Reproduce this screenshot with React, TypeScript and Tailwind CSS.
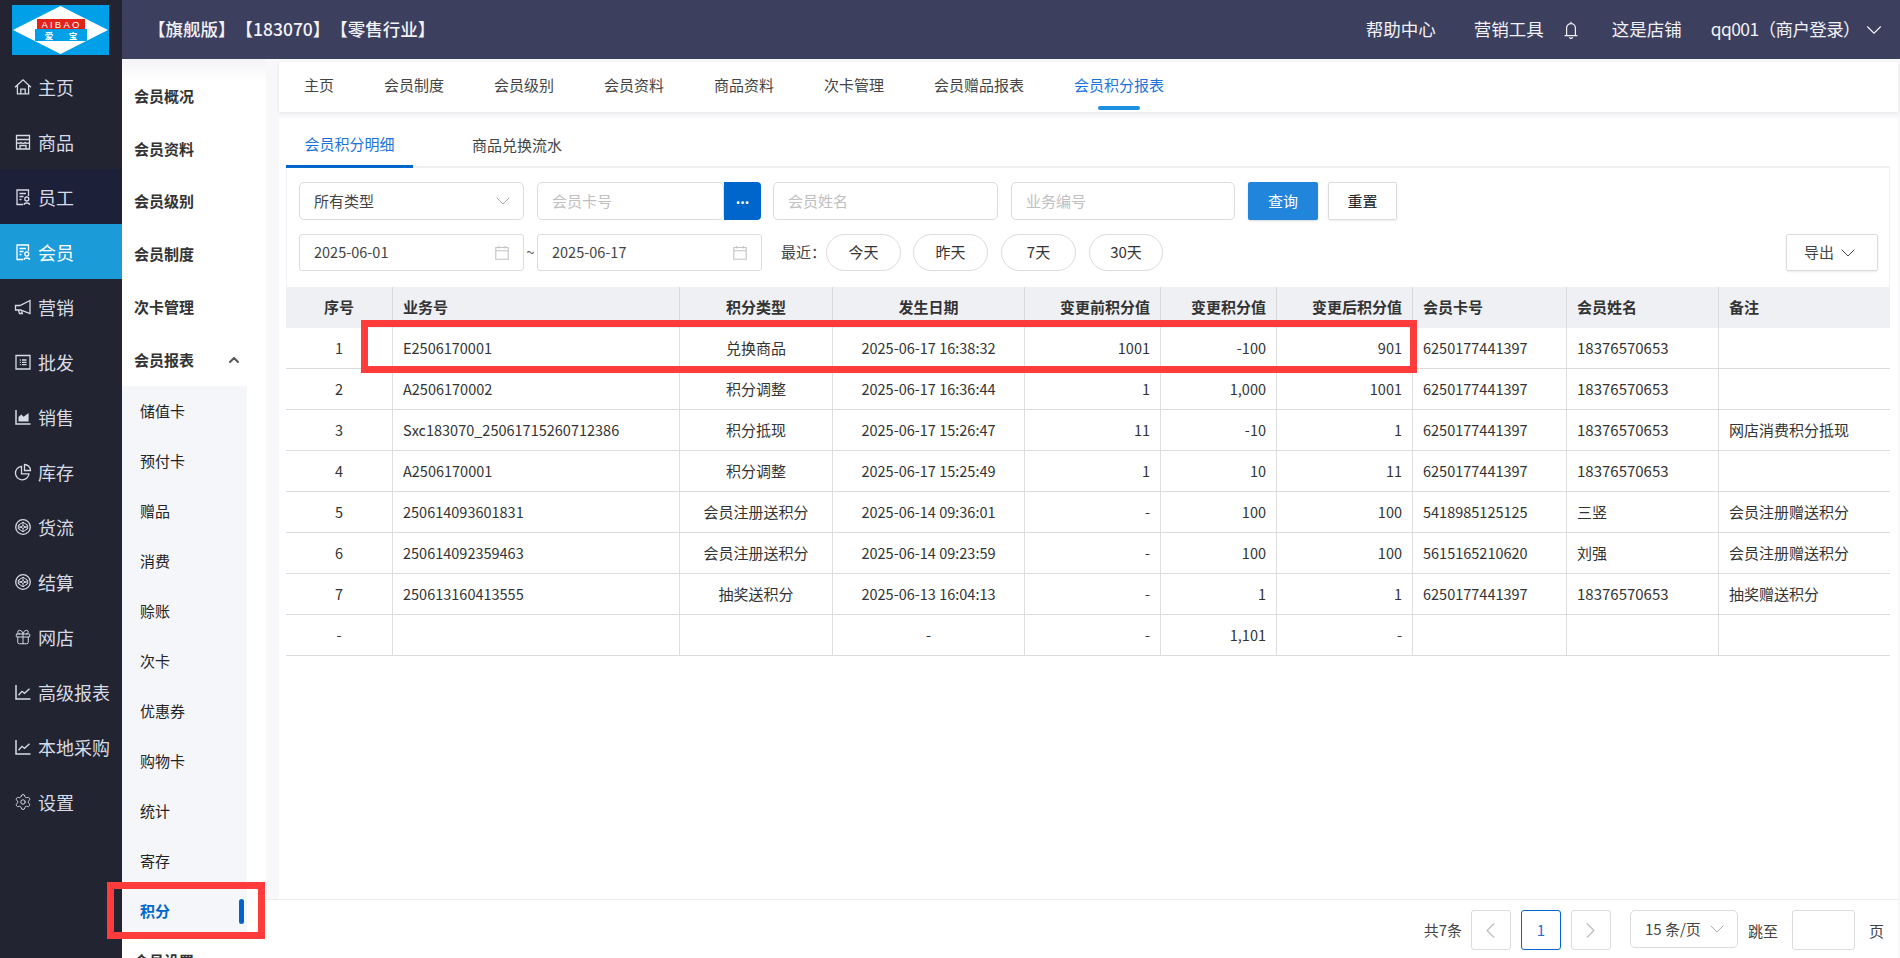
import { ChevronDown, ChevronLeft, ChevronRight, ChevronUp, Gift, Settings } from "lucide-react";
import type { ReactNode } from "react";

const iconProps = { width: 18, height: 18, viewBox: "0 0 18 18", fill: "none", stroke: "currentColor", strokeWidth: 1.3 };

const IconHome = () => (
  <svg {...iconProps}>
    <path d="M1 9.2 9 1.8l8 7.4M3.4 7.6v8.2h11.2V7.6M6.800 15.8v-4.600h4.400v4.600" />
  </svg>
);
const IconStore = () => (
  <svg {...iconProps}>
    <path d="M2.500 2.500h13v13.500h-13zM2.500 6.500h13M2.500 9.500c2 1.200 3 1.200 4.300 0 1.400 1.200 3 1.200 4.400 0 1.300 1.200 2.500 1.200 4.300 0M6 16v-3.500h6V16" />
  </svg>
);
const IconDoc = () => (
  <svg {...iconProps}>
    <path d="M14.500 8V2H3v14.500h6M5.500 5.500h6.500M5.500 8.500h4M5.500 11.500h2" />
    <circle cx="12.800" cy="11" r="2" />
    <path d="M10 16.800c.3-2.400 5.300-2.400 5.600 0" />
  </svg>
);
const IconMegaphone = () => (
  <svg {...iconProps}>
    <path d="M16 2.500v13L6.500 12H1.500V7.500H6zM4.500 12.300l1 3.200h2.800l-.7-2.200" />
  </svg>
);
const IconList = () => (
  <svg {...iconProps}>
    <path d="M2 2.500h14v13.500H2zM8 7h4.500M8 9.300h4.500M8 11.600h4.500M5.800 7h1M5.800 9.300h1M5.800 11.600h1" />
  </svg>
);
const IconArea = () => (
  <svg {...iconProps}>
    <path d="M2 2v14h14.500" strokeWidth="1.500" />
    <path d="M4.500 13.500V9l2.800-2.500 2.300 2.300 2-1.500 3-2.300v8.500z" fill="currentColor" stroke="none" />
  </svg>
);
const IconPie = () => (
  <svg {...iconProps}>
    <path d="M7.500 3.300a6.800 6.800 0 1 0 7.500 7.500H7.500zM10.500 1.500v6h6a6 6 0 0 0-6-6z" />
  </svg>
);
const IconCube = () => (
  <svg {...iconProps}>
    <circle cx="9" cy="9" r="7.300" />
    <path d="M9 4.200l4.700 3.100v3.400L9 13.800l-4.700-3.100V7.300zM4.300 7.300 9 10.500l4.700-3.200M4.300 10.700 9 7.500l4.700 3.200M9 4.200v3.300M9 10.500v3.300" strokeWidth="1" />
  </svg>
);
const IconLine = () => (
  <svg {...iconProps}>
    <path d="M2 2v14h14.500" strokeWidth="1.500" />
    <path d="M4.500 12.300 8 8.300l2.500 2 5-4.500" />
  </svg>
);
const IconCalendar = () => (
  <svg width="14" height="15" viewBox="0 0 14 15" fill="none" stroke="#c4c4c4" strokeWidth="1.100">
    <path d="M.8 2.500h12.400v11.700H.8zM.8 5.800h12.400M3.800.8v2.800M10.200.8v2.800" />
  </svg>
);
const IconBell = () => (
  <svg width="14" height="18" viewBox="0 0 14 18" fill="none" stroke="currentColor" strokeWidth="1.200">
    <path d="M7 .8v1.600M2.600 14.500V7a4.400 4.400 0 0 1 8.800 0v7.500M.6 14.600h12.800M5.400 16.300a1.700 1.700 0 0 0 3.200 0" />
  </svg>
);

const railItems: { label: string; icon: ReactNode; cls?: string }[] = [
  { label: "主页", icon: <IconHome /> },
  { label: "商品", icon: <IconStore /> },
  { label: "员工", icon: <IconDoc />, cls: "bg-[#1c2039]" },
  { label: "会员", icon: <IconDoc />, cls: "bg-[#1b9cd9] text-white" },
  { label: "营销", icon: <IconMegaphone /> },
  { label: "批发", icon: <IconList /> },
  { label: "销售", icon: <IconArea /> },
  { label: "库存", icon: <IconPie /> },
  { label: "货流", icon: <IconCube /> },
  { label: "结算", icon: <IconCube /> },
  { label: "网店", icon: <Gift size={18} strokeWidth={1.3} /> },
  { label: "高级报表", icon: <IconLine /> },
  { label: "本地采购", icon: <IconLine /> },
  { label: "设置", icon: <Settings size={18} strokeWidth={1.3} /> },
];

const subMenus = ["储值卡", "预付卡", "赠品", "消费", "赊账", "次卡", "优惠券", "购物卡", "统计", "寄存"];
const topTabs = ["主页", "会员制度", "会员级别", "会员资料", "商品资料", "次卡管理", "会员赠品报表", "会员积分报表"];

const gridCols = "grid grid-cols-[107px_287px_153px_192px_136px_116px_136px_154px_152px_171px]";

const rows = [
  ["1", "E2506170001", "兑换商品", "2025-06-17 16:38:32", "1001", "-100", "901", "6250177441397", "18376570653", ""],
  ["2", "A2506170002", "积分调整", "2025-06-17 16:36:44", "1", "1,000", "1001", "6250177441397", "18376570653", ""],
  ["3", "Sxc183070_25061715260712386", "积分抵现", "2025-06-17 15:26:47", "11", "-10", "1", "6250177441397", "18376570653", "网店消费积分抵现"],
  ["4", "A2506170001", "积分调整", "2025-06-17 15:25:49", "1", "10", "11", "6250177441397", "18376570653", ""],
  ["5", "250614093601831", "会员注册送积分", "2025-06-14 09:36:01", "-", "100", "100", "5418985125125", "三竖", "会员注册赠送积分"],
  ["6", "250614092359463", "会员注册送积分", "2025-06-14 09:23:59", "-", "100", "100", "5615165210620", "刘强", "会员注册赠送积分"],
  ["7", "250613160413555", "抽奖送积分", "2025-06-13 16:04:13", "-", "1", "1", "6250177441397", "18376570653", "抽奖赠送积分"],
  ["-", "", "", "-", "-", "1,101", "-", "", "", ""],
];

const headers = ["序号", "业务号", "积分类型", "发生日期", "变更前积分值", "变更积分值", "变更后积分值", "会员卡号", "会员姓名", "备注"];

const colAlign = (i: number) => {
  if (i === 0 || i === 2 || i === 3) return "justify-center";
  if (i >= 4 && i <= 6) return "justify-end pr-[10px]";
  return "justify-start pl-[10px]";
};

const Field = ({ text, className }: { text: string; className: string }) => (
  <div className={`h-[38px] rounded-[5px] border border-[#dcdcdc] px-[14px] flex items-center text-[#c0c0c0] ${className}`}>
    {text}
  </div>
);

const DateField = ({ text }: { text: string }) => (
  <div className="h-[37px] w-[225px] rounded-[3px] border border-[#dcdcdc] px-[14px] pb-[1px] flex items-center justify-between text-[14.500px] text-[#444]">
    {text}
    <IconCalendar />
  </div>
);

const Pill = ({ text, className }: { text: string; className: string }) => (
  <div className={`h-[37px] rounded-[19px] border border-[#dcdcdc] flex items-center justify-center text-[#333] ${className}`}>
    {text}
  </div>
);

const PageBox = ({ children, active }: { children: ReactNode; active?: boolean }) => (
  <div className={`w-[40px] h-[40px] rounded-[3px] border flex items-center justify-center ${active ? "border-[#0066cc] text-[#1a73d9]" : "border-[#dcdcdc] text-[#bbb]"}`}>
    {children}
  </div>
);

export default function App() {
  return (
    <div className="relative flex h-screen w-full overflow-hidden bg-white font-['Noto_Sans_CJK_SC','Noto_Sans',sans-serif] text-[15px] text-[#333] [text-spacing-trim:space-all]">
      {/* left rail */}
      <aside className="w-[122px] shrink-0 bg-[#222531] text-[#d8dbe6]">
        <div className="h-[59px] pl-[12px] pt-[5px]">
          <svg width="97" height="50" viewBox="0 0 97 50">
            <rect width="97" height="50" fill="#00a0e9" />
            <polygon points="1,25 48.500,1 96,25 48.500,49" fill="#fff" />
            <rect x="25" y="14" width="48" height="10" fill="#e2231a" />
            <rect x="23" y="24" width="52" height="12" fill="#00a0e9" />
            <text x="49.500" y="22.500" textAnchor="middle" fontSize="9.500" fill="#fff" letterSpacing="2.200" fontFamily="Liberation Sans">AIBAO</text>
            <text x="37" y="33.500" textAnchor="middle" fontSize="8.500" fill="#fff" fontWeight="700">爱</text>
            <text x="61" y="33.500" textAnchor="middle" fontSize="8.500" fill="#fff" fontWeight="700">宝</text>
          </svg>
        </div>
        {railItems.map((item) => (
          <div key={item.label} className={`h-[55px] pl-[14px] flex items-center gap-[6px] text-[18px] ${item.cls ?? ""}`}>
            {item.icon}
            <span className="pt-[1px]">{item.label}</span>
          </div>
        ))}
      </aside>

      <div className="flex-1 flex flex-col min-w-0">
        {/* top bar */}
        <header className="h-[59px] shrink-0 bg-[#3d3f5f] pl-[26px] pr-[13px] flex items-center justify-between text-[#f2f2f6] text-[17.500px]">
          <div className="font-medium">【旗舰版】【183070】【零售行业】</div>
          <div className="flex items-center">
            <span>帮助中心</span>
            <span className="ml-[38px]">营销工具</span>
            <span className="ml-[20px]"><IconBell /></span>
            <span className="ml-[34px]">这是店铺</span>
            <span className="ml-[29px] tracking-[-0.6px]">qq001（商户登录）</span>
            <ChevronDown size={26} strokeWidth={1} className="ml-[1px]" />
          </div>
        </header>

        <div className="flex-1 flex min-h-0">
          {/* second menu */}
          <nav className="w-[144px] shrink-0 overflow-hidden bg-gradient-to-b from-[#f4f4f6] to-white to-[22px] pt-[11px]">
            {["会员概况", "会员资料", "会员级别", "会员制度", "次卡管理"].map((m) => (
              <div key={m} className="h-[52.700px] pl-[12px] flex items-center font-bold text-[#333]">
                {m}
              </div>
            ))}
            <div className="h-[52.700px] pl-[12px] pr-[24px] flex items-center justify-between font-bold text-[#333]">
              会员报表
              <ChevronUp size={16} strokeWidth={3} className="text-[#555]" />
            </div>
            <div className="w-[125px] bg-[#f5f6fa]">
              {subMenus.map((m) => (
                <div key={m} className="h-[50px] pl-[18px] flex items-center text-[#222]">
                  {m}
                </div>
              ))}
              <div className="h-[50px] pl-[18px] pr-[3px] flex items-center justify-between font-bold text-[#0066cc]">
                积分
                <span className="w-[5px] h-[25px] rounded-[3px] bg-[#0066cc]" />
              </div>
            </div>
            <div className="h-[50px] pl-[12px] flex items-center font-bold text-[#333]">会员设置</div>
          </nav>

          {/* main */}
          <main className="flex-1 min-w-0 flex flex-col bg-[#f8f8fa]">
            <div className="flex-1 min-h-0 flex flex-col pl-[13px] pr-[2px] pt-[3px]">
              <div className="h-[50px] shrink-0 bg-white shadow-[0_1px_4px_rgba(0,0,0,0.08)] flex">
                {topTabs.map((t, i) => (
                  <div key={t} className={`relative px-[25px] pb-[4px] flex items-center ${i === 7 ? "text-[#1a73d9]" : "text-[#444]"}`}>
                    {t}
                    {i === 7 && <span className="absolute bottom-[2px] left-[49px] right-[49px] h-[4px] rounded-[2px] bg-[#1b8fe0]" />}
                  </div>
                ))}
              </div>

              <div className="flex-1 mt-[6px] bg-white px-[7px] pr-[8px] min-h-0">
                <div className="h-[50px] flex border-b-2 border-[#f0f0f0]">
                  <div className="h-[50px] w-[127px] pt-[6px] border-b-[3px] border-[#0066cc] flex items-center justify-center text-[#1a73d9]">
                    会员积分明细
                  </div>
                  <div className="ml-[59px] pt-[6px] flex items-center text-[#444]">商品兑换流水</div>
                </div>

                <div className="border-x border-[#f0f0f0] pt-[14px] px-[12px] h-[119px]">
                  <div className="flex items-center">
                    <div className="h-[38px] w-[225px] rounded-[5px] border border-[#dcdcdc] pl-[14px] pr-[8px] flex items-center justify-between text-[#444]">
                      所有类型
                      <ChevronDown size={24} strokeWidth={1} className="text-[#aaa]" />
                    </div>
                    <Field text="会员卡号" className="ml-[13px] w-[187px]" />
                    <div className="h-[38px] w-[37px] rounded-r-[4px] bg-[#0066cc] flex items-center justify-center text-white text-[14px] font-bold pb-[6px]">
                      ...
                    </div>
                    <Field text="会员姓名" className="ml-[12px] w-[225px]" />
                    <Field text="业务编号" className="ml-[13px] w-[224px]" />
                    <div className="ml-[13px] h-[38px] w-[70px] rounded-[2px] bg-[#2185dc] text-white flex items-center justify-center shadow-[0_1px_2px_rgba(0,0,0,0.15)]">
                      查询
                    </div>
                    <div className="ml-[10px] h-[38px] w-[69px] rounded-[2px] border border-[#dcdcdc] text-[#222] flex items-center justify-center shadow-[0_1px_2px_rgba(0,0,0,0.08)]">
                      重置
                    </div>
                  </div>
                  <div className="mt-[14px] flex items-center">
                    <DateField text="2025-06-01" />
                    <span className="w-[13px] text-center text-[#555]">~</span>
                    <DateField text="2025-06-17" />
                    <span className="ml-[19px] text-[#444]">最近：</span>
                    <Pill text="今天" className="w-[75px]" />
                    <Pill text="昨天" className="ml-[12px] w-[75px]" />
                    <Pill text="7天" className="ml-[13px] w-[75px]" />
                    <Pill text="30天" className="ml-[13px] w-[74px]" />
                    <div className="ml-auto mr-[-1px] h-[37px] w-[92px] rounded-[2px] border border-[#dcdcdc] flex items-center justify-center gap-[2px] text-[#444] shadow-[0_1px_2px_rgba(0,0,0,0.08)]">
                      导出
                      <ChevronDown size={24} strokeWidth={1} />
                    </div>
                  </div>
                </div>

                {/* table */}
                <div className="w-[1604px]">
                  <div className={`${gridCols} h-[41px] bg-[#eff0f4] font-bold`}>
                    {headers.map((h, i) => (
                      <div key={h} className={`flex items-center ${colAlign(i)} ${i < 9 ? "border-r border-[#d9d9d9]" : ""}`}>
                        {h}
                      </div>
                    ))}
                  </div>
                  {rows.map((row) => (
                    <div key={row[0]} className={`${gridCols} h-[41px] border-b border-[#dcdcdc]`}>
                      {row.map((cell, i) => (
                        <div
                          key={i}
                          className={`flex items-center whitespace-nowrap ${colAlign(i)} ${i === 2 || i === 8 || i === 9 ? "text-[15px]" : "text-[14.500px]"} ${i < 9 ? "border-r border-[#dfdfdf]" : ""}`}
                        >
                          {cell}
                        </div>
                      ))}
                    </div>
                  ))}
                </div>
              </div>
            </div>

            {/* pagination */}
            <footer className="h-[59px] shrink-0 -mt-px mr-[2px] bg-white border-t border-[#ececec] pt-[10px] pr-[14px] flex justify-end text-[#444]">
              <span className="h-[40px] flex items-center">共7条</span>
              <div className="ml-[9px] flex gap-[10px]">
                <PageBox><ChevronLeft size={27} strokeWidth={1} /></PageBox>
                <PageBox active><span>1</span></PageBox>
                <PageBox><ChevronRight size={27} strokeWidth={1} /></PageBox>
              </div>
              <div className="ml-[19px] h-[38px] w-[108px] rounded-[5px] border border-[#dcdcdc] pl-[14px] pr-[8px] flex items-center justify-between whitespace-nowrap">
                15 条/页
                <ChevronDown size={24} strokeWidth={1} className="text-[#aaa]" />
              </div>
              <span className="ml-[10px] h-[40px] flex items-center pt-[2px]">跳至</span>
              <div className="ml-[14px] w-[63px] h-[40px] rounded-[3px] border border-[#dcdcdc]" />
              <span className="ml-[14px] h-[40px] flex items-center pt-[2px]">页</span>
            </footer>
          </main>
        </div>
      </div>

      {/* red annotation boxes */}
      <div className="absolute left-[361px] top-[320px] w-[1056px] h-[53px] border-[7px] border-[#ff3b3b]" />
      <div className="absolute left-[107px] top-[882px] w-[158px] h-[57px] border-[7px] border-[#ff3b3b]" />
    </div>
  );
}
